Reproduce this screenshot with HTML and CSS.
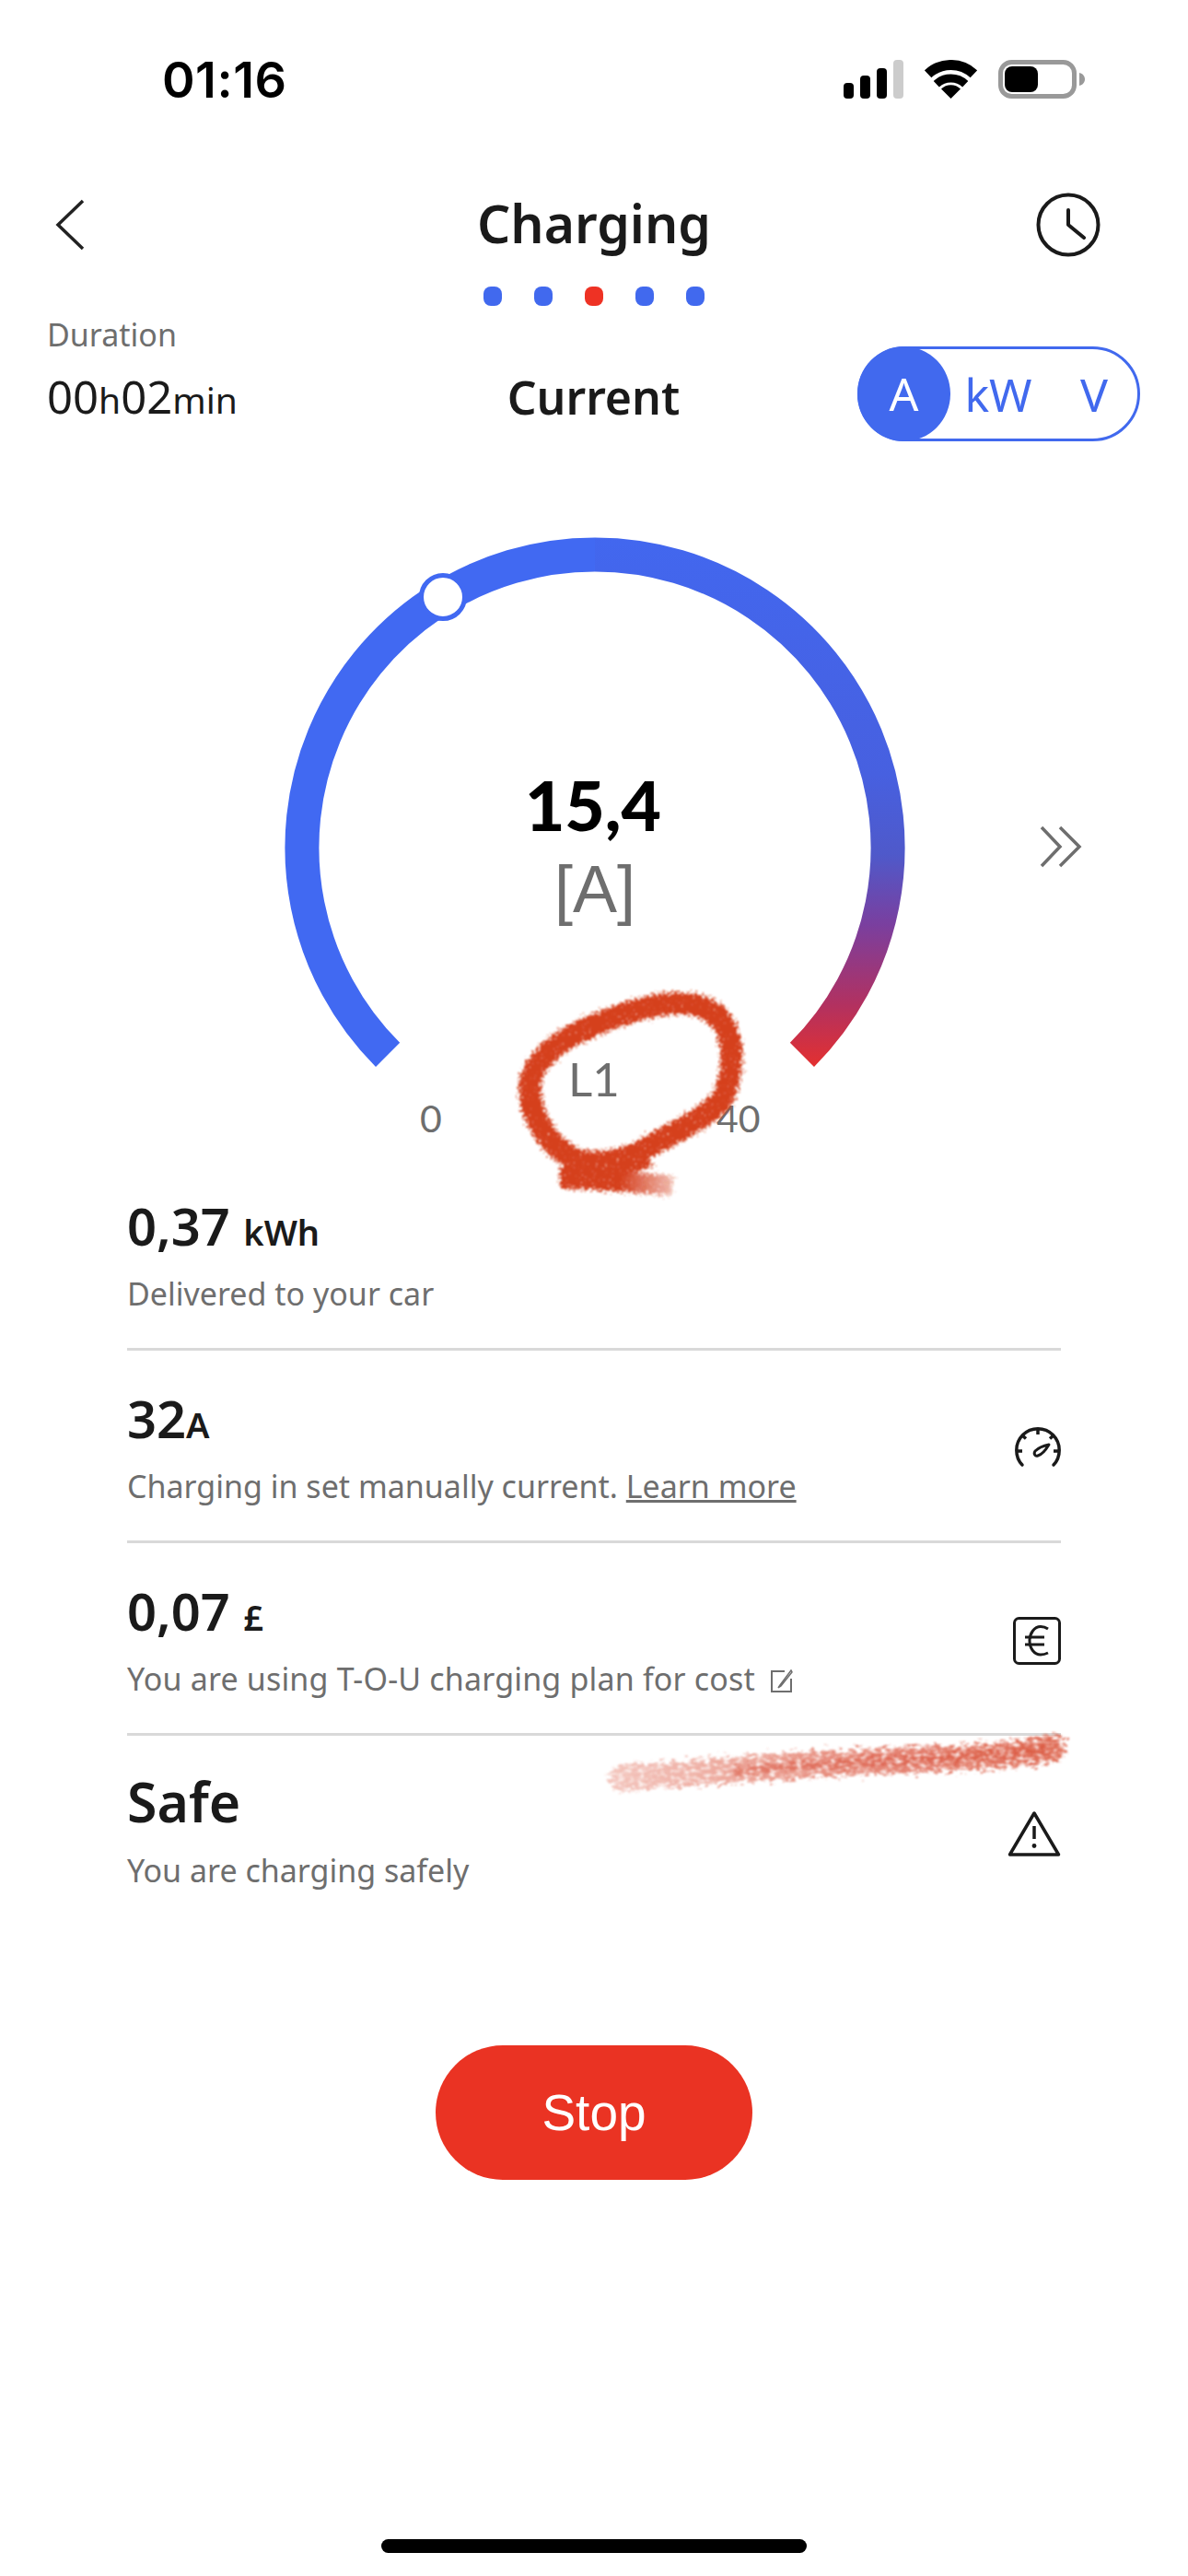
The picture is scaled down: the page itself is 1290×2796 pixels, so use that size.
FILE: index.html
```html
<!DOCTYPE html>
<html lang="en">
<head>
  <meta charset="UTF-8">
  <title>Charging</title>
  <link rel="stylesheet" href="styles.css">
</head>
<body>
  <div class="screen">
    <div class="status">
      <span class="time">01:16</span>
      <div class="status-icons">
        <svg class="signal" width="65" height="42" viewBox="0 0 65 42">
          <rect x="0" y="25" width="11" height="17" rx="4" fill="#000"/>
          <rect x="18" y="17" width="11" height="25" rx="4" fill="#000"/>
          <rect x="36" y="9" width="11" height="33" rx="4" fill="#000"/>
          <rect x="54" y="0" width="11" height="42" rx="4" fill="#ccc"/>
        </svg>
        <svg class="wifi" width="57" height="42" viewBox="0 0 57 42">
          <path d="M3.6 15.3A36.5 36.5 0 0 1 53.4 15.3" fill="none" stroke="#000" stroke-width="11"/>
          <path d="M12.8 26.3A23 23 0 0 1 44.2 26.3" fill="none" stroke="#000" stroke-width="9"/>
          <path d="M28.5 42L18 31.5A15 15 0 0 1 39 31.5Z" fill="#000"/>
        </svg>
        <svg class="battery" width="94" height="42" viewBox="0 0 94 42">
          <rect x="2.5" y="2.5" width="80" height="37" rx="12" fill="none" stroke="#999" stroke-width="5"/>
          <rect x="7" y="7" width="36" height="28" rx="8" fill="#000"/>
          <path d="M88 14C92 15 94 18 94 21C94 24 92 27 88 28Z" fill="#999"/>
        </svg>
      </div>
    </div>

    <div class="header">
      <svg class="back" width="32" height="56" viewBox="0 0 32 56">
        <path d="M30 2L3 28L30 54" fill="none" stroke="#222" stroke-width="3.5"/>
      </svg>
      <div class="title">Charging</div>
      <svg class="clock" width="70" height="70" viewBox="0 0 70 70">
        <circle cx="35" cy="35" r="32.5" fill="none" stroke="#1a1a1a" stroke-width="4"/>
        <path d="M35 19V35L52 49" fill="none" stroke="#1a1a1a" stroke-width="4" stroke-linecap="round" stroke-linejoin="round"/>
      </svg>
    </div>

    <div class="dots">
      <span class="dot"></span>
      <span class="dot"></span>
      <span class="dot dot-active"></span>
      <span class="dot"></span>
      <span class="dot"></span>
    </div>

    <div class="summary">
      <div class="duration">
        <div class="duration-label">Duration</div>
        <div class="duration-value">00<small>h</small>02<small>min</small></div>
      </div>
      <div class="summary-title">Current</div>
      <div class="units">
        <span class="unit unit-on">A</span>
        <span class="unit">kW</span>
        <span class="unit">V</span>
      </div>
    </div>

    <div class="gauge">
      <svg class="gauge-arc" width="700" height="620" viewBox="-350 -350 700 620">
        <defs>
          <linearGradient id="arcfade" gradientUnits="userSpaceOnUse" x1="0" y1="-340" x2="0" y2="240">
            <stop offset="0" stop-color="#4267ef"/>
            <stop offset="0.45" stop-color="#4760e0"/>
            <stop offset="0.6" stop-color="#4f59ca"/>
            <stop offset="0.73" stop-color="#7a3f9f"/>
            <stop offset="0.88" stop-color="#b23160"/>
            <stop offset="1" stop-color="#e5302e"/>
          </linearGradient>
        </defs>
        <path d="M-224.900 224.900A318 318 0 0 1 0 -318" fill="none" stroke="#4169f2" stroke-width="37"/>
        <path d="M0 -318A318 318 0 0 1 224.900 224.900" fill="none" stroke="url(#arcfade)" stroke-width="37"/>
        <circle cx="-165" cy="-272" r="23.5" fill="#fff" stroke="#4169f2" stroke-width="5"/>
      </svg>
      <div class="reading">
        <div class="reading-value">15,4</div>
        <div class="reading-unit">[A]</div>
      </div>
      <span class="scale scale-min">0</span>
      <span class="scale scale-phase">L1</span>
      <span class="scale scale-max">40</span>
      <svg class="next" width="46" height="46" viewBox="0 0 46 46">
        <path d="M2 2L22 23L2 44M22 2L43 23L22 44" fill="none" stroke="#6e6e6e" stroke-width="3.5"/>
      </svg>
    </div>

    <div class="rows">
      <div class="row">
        <div>
          <div class="row-value">0,37 <small>kWh</small></div>
          <div class="row-text">Delivered to your car</div>
        </div>
      </div>
      <div class="row">
        <div>
          <div class="row-value">32<small>A</small></div>
          <div class="row-text">Charging in set manually current. <a class="more" href="#">Learn more</a></div>
        </div>
        <svg class="row-icon icon-speed" width="50" height="46" viewBox="0 0 50 46">
          <path d="M8 42C4 38 1.800 32 1.800 26A23.200 23.200 0 0 1 48.200 26C48.200 32 46 38 42 42" fill="none" stroke="#1a1a1a" stroke-width="3.500" stroke-linecap="round"/>
          <path d="M25 3V9M8 10L12 13.500M42 10L38 13.500M2 27H8M48 27H42" fill="none" stroke="#1a1a1a" stroke-width="3.500"/>
          <path d="M37 20C32 21 25 24 22 27C20 30 22 33 25 32C29 31 34 25 37 20Z" fill="none" stroke="#1a1a1a" stroke-width="3" stroke-linejoin="round"/>
        </svg>
      </div>
      <div class="row">
        <div>
          <div class="row-value">0,07 <small>£</small></div>
          <div class="row-text row-text-wide">You are using T-O-U charging plan for cost
            <svg class="edit" width="24" height="25" viewBox="0 0 24 25">
              <path d="M15 2H1V24H22V10" fill="none" stroke="#6e6e6e" stroke-width="2"/>
              <path d="M22 1L10 17L8 20L11 18L23 3Z" fill="none" stroke="#6e6e6e" stroke-width="1.5"/>
            </svg>
          </div>
        </div>
        <svg class="row-icon icon-cost" width="52" height="52" viewBox="0 0 52 52">
          <rect x="1.5" y="1.5" width="49" height="49" rx="5" fill="none" stroke="#1a1a1a" stroke-width="3"/>
          <path d="M38 13C35 11 33 10.500 30 10.500C23 10.500 18 18 18 26C18 34 23 41 30 41C33 41 35 40.500 38 39" fill="none" stroke="#1a1a1a" stroke-width="3"/>
          <path d="M13 22H34M13 30H34" fill="none" stroke="#1a1a1a" stroke-width="3"/>
        </svg>
      </div>
      <div class="row row-safe">
        <div>
          <div class="row-value">Safe</div>
          <div class="row-text">You are charging safely</div>
        </div>
        <svg class="row-icon icon-warn" width="58" height="50" viewBox="0 0 58 50">
          <path d="M29 3L2.500 48H55.500Z" fill="none" stroke="#1a1a1a" stroke-width="3.500" stroke-linejoin="round"/>
          <path d="M29 17V31" fill="none" stroke="#1a1a1a" stroke-width="3.500"/>
          <circle cx="29" cy="38.500" r="2.400" fill="#1a1a1a"/>
        </svg>
      </div>
    </div>

    <button class="stop">Stop</button>
    <div class="home-bar"></div>

    <!-- marker scribbles drawn on top of the screenshot -->
    <svg class="marks" width="1290" height="2796" viewBox="0 0 1290 2796">
      <defs>
        <filter id="rough" filterUnits="userSpaceOnUse" x="530" y="1050" width="310" height="280">
          <feTurbulence type="fractalNoise" baseFrequency="0.4" numOctaves="3" seed="4" result="noise"/>
          <feDisplacementMap in="SourceGraphic" in2="noise" scale="16" xChannelSelector="R" yChannelSelector="G" result="moved"/>
          <feColorMatrix in="noise" type="matrix" values="0 0 0 0 0 0 0 0 0 0 0 0 0 0 0 0 0 0 7 -1.100" result="specks"/>
          <feComposite in="moved" in2="specks" operator="in"/>
          <feGaussianBlur stdDeviation="0.8"/>
        </filter>
        <filter id="grain" filterUnits="userSpaceOnUse" x="630" y="1860" width="560" height="100">
          <feTurbulence type="fractalNoise" baseFrequency="0.14 0.28" numOctaves="4" seed="9" result="noise"/>
          <feDisplacementMap in="SourceGraphic" in2="noise" scale="20" xChannelSelector="R" yChannelSelector="G" result="moved"/>
          <feColorMatrix in="noise" type="matrix" values="0 0 0 0 0 0 0 0 0 0 0 0 0 0 0 0 0 0 2.800 -0.500" result="specks"/>
          <feComposite in="moved" in2="specks" operator="in"/>
          <feGaussianBlur stdDeviation="1.2"/>
        </filter>
        <linearGradient id="tailfade" gradientUnits="userSpaceOnUse" x1="600" y1="0" x2="735" y2="0">
          <stop offset="0.55" stop-color="#d5401f"/>
          <stop offset="1" stop-color="#d5401f" stop-opacity="0.3"/>
        </linearGradient>
        <linearGradient id="linefade" gradientUnits="userSpaceOnUse" x1="668" y1="0" x2="1146" y2="0">
          <stop offset="0" stop-color="#e06a55" stop-opacity="0.4"/>
          <stop offset="0.5" stop-color="#dc5a44" stop-opacity="0.7"/>
          <stop offset="1" stop-color="#da5238" stop-opacity="0.85"/>
        </linearGradient>
      </defs>
      <g filter="url(#rough)" fill="none">
        <path d="M576 1172C588 1135 630 1118 665 1105C700 1092 750 1078 778 1102C800 1125 798 1165 783 1195C760 1218 725 1232 695 1250C665 1264 630 1268 608 1248C590 1232 572 1205 576 1172Z" stroke="#d5401f" stroke-width="24"/>
        <path d="M612 1262C640 1268 680 1262 705 1254" stroke="#d5401f" stroke-width="26"/>
        <path d="M608 1279C650 1280 690 1283 730 1287" stroke="url(#tailfade)" stroke-width="22"/>
      </g>
      <g filter="url(#grain)" fill="none" stroke-linecap="round">
        <path d="M676 1930C780 1922 860 1915 950 1912C1030 1908 1100 1908 1144 1897" stroke="url(#linefade)" stroke-width="28"/>
        <path d="M800 1922C860 1916 960 1912 1136 1900" stroke="#d84a30" stroke-opacity="0.45" stroke-width="9"/>
      </g>
    </svg>
  </div>
</body>
</html>
```

FILE: styles.css
```css
* {
  margin: 0;
  padding: 0;
  box-sizing: border-box;
}

body {
  background: #fff;
  font-family: "Noto Sans", Arial, sans-serif;
  color: #1a1a1a;
}

.screen {
  position: relative;
  display: flex;
  flex-direction: column;
  width: 1290px;
  height: 2796px;
  overflow: hidden;
  background: #fff;
}

/* status bar */
.status {
  display: flex;
  justify-content: space-between;
  align-items: flex-start;
  height: 194px;
  padding: 57px 112px 0 176px;
}

.time {
  font-family: Inter, sans-serif;
  font-size: 54px;
  line-height: 60px;
  font-weight: 600;
  letter-spacing: 0.5px;
  color: #000;
}

.status-icons {
  display: flex;
  align-items: flex-end;
  gap: 23px;
  padding-top: 8px;
}

/* title row */
.header {
  display: grid;
  grid-template-columns: 1fr auto 1fr;
  align-items: center;
  height: 100px;
  padding: 0 60px;
}

.title {
  font-size: 57px;
  line-height: 70px;
  font-weight: 600;
  margin-top: -4px;
}

.clock {
  justify-self: end;
  margin-right: 35px;
}

.dots {
  display: flex;
  justify-content: center;
  gap: 35px;
  margin-top: 17px;
}

.dot {
  width: 20px;
  height: 21px;
  border-radius: 8px;
  background: #4169ee;
}

.dot-active {
  background: #ee3224;
}

/* duration, page name, unit switch */
.summary {
  display: grid;
  grid-template-columns: 1fr auto 1fr;
  align-items: end;
  height: 147px;
  padding: 0 52px 0 51px;
}

.duration-label {
  font-size: 34px;
  line-height: 44px;
  color: #6e6e6e;
}

.duration-value {
  font-size: 49px;
  line-height: 60px;
  margin: 15px 0 15px;
}

.duration-value small {
  font-size: 39px;
}

.summary-title {
  font-size: 50px;
  line-height: 60px;
  font-weight: 600;
  margin-bottom: 18px;
}

.units {
  display: flex;
  justify-self: end;
  align-items: center;
  width: 307px;
  height: 103px;
  border: 3px solid #4169ee;
  border-radius: 52px;
  color: #4169ee;
  font-size: 50px;
}

.unit {
  flex-shrink: 0;
  width: 104px;
  text-align: center;
}

.unit-on {
  width: 101px;
  height: 103px;
  margin: -3px 0 -3px -3px;
  border-radius: 50%;
  line-height: 103px;
  background: #4169ee;
  color: #fff;
}

/* dial */
.gauge {
  position: relative;
  height: 778px;
  padding: 91px 0 0 2px;
}

.gauge-arc {
  display: block;
  margin: 0 auto;
}

.reading {
  position: absolute;
  left: 0;
  right: 0;
  top: 347px;
  text-align: center;
}

.reading-value {
  font-family: Lato, sans-serif;
  font-size: 75px;
  line-height: 94px;
  font-weight: 900;
  color: #000;
  padding-right: 2px;
}

.reading-unit {
  font-family: "Liberation Sans", Arial, sans-serif;
  font-size: 72px;
  line-height: 84px;
  margin-top: 3px;
  padding-left: 2px;
  color: #6e6e6e;
}

.scale {
  position: absolute;
  font-family: Lato, sans-serif;
  font-size: 41px;
  line-height: 50px;
  color: #6e6e6e;
}

.scale-min {
  left: 456px;
  top: 710px;
}

.scale-max {
  left: 778px;
  top: 710px;
}

.scale-phase {
  left: 617px;
  top: 667px;
  font-size: 51px;
}

.next {
  position: absolute;
  left: 1129px;
  top: 417px;
}

/* info rows */
.rows {
  margin: 0 138px;
}

.row {
  display: flex;
  justify-content: space-between;
  align-items: center;
  height: 209px;
  border-bottom: 3px solid #d9d9d9;
}

.row:last-child {
  border-bottom-color: transparent;
}

.row-value {
  font-size: 56px;
  line-height: 72px;
  font-weight: 600;
}

.row-value small {
  font-size: 38px;
  font-weight: 600;
}

.row-text {
  margin-top: 8px;
  font-size: 34px;
  line-height: 46px;
  color: #6e6e6e;
}

.row-text-wide {
  letter-spacing: 0.17px;
}

.row-safe .row-value {
  font-size: 59px;
  margin-top: -2px;
}

.row-safe .row-text {
  margin-top: 16px;
}

.more {
  color: #6e6e6e;
}

.edit {
  margin-left: 8px;
  vertical-align: -2px;
}

.icon-speed {
  margin-top: 4px;
}

.icon-cost {
  margin-top: 5px;
}

.icon-warn {
  margin-top: 6px;
}

.stop {
  align-self: center;
  width: 344px;
  height: 146px;
  margin-top: 127px;
  border: 0;
  border-radius: 73px;
  background: #ea3323;
  color: #fff;
  font-family: "Liberation Sans", Arial, sans-serif;
  font-size: 55px;
}

.home-bar {
  align-self: center;
  width: 462px;
  height: 15px;
  margin-top: 390px;
  border-radius: 8px;
  background: #000;
}

.marks {
  position: absolute;
  left: 0;
  top: 0;
  pointer-events: none;
}
```
